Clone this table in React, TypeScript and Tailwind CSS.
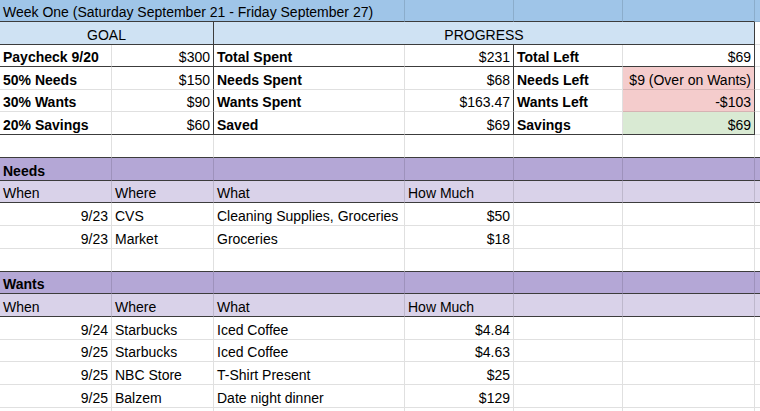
import clsx from 'clsx';

type Cell = {
  t?: string;
  w: string;
  a?: 'l' | 'r' | 'c';
  b?: boolean;
  bg?: string;
  rd?: boolean; // dark right border
  bd?: boolean; // dark bottom border
};

const W = {
  A: 'w-[112px]',
  B: 'w-[102px]',
  C: 'w-[191px]',
  D: 'w-[109px]',
  E: 'w-[109px]',
  F: 'w-[132px]',
  G: 'flex-1',
};

function SheetCell({ c }: { c: Cell }) {
  return (
    <div
      className={clsx(
        'flex items-end shrink-0 border-r border-b px-[3px] pb-[1px] overflow-hidden whitespace-nowrap leading-[16px]',
        c.w,
        c.a === 'r' && 'justify-end',
        c.a === 'c' && 'justify-center',
        c.b && 'font-bold',
        c.bg,
        c.rd ? 'border-r-[#3c3c3c]' : 'border-r-[#0000001f]',
        c.bd ? 'border-b-[#3c3c3c]' : 'border-b-[#0000001f]'
      )}
    >
      {c.t}
    </div>
  );
}

function Row({ h, cells, bg }: { h: string; cells: Cell[]; bg?: string }) {
  return (
    <div className={clsx('flex', h, bg)}>
      {cells.map((c, i) => (
        <SheetCell key={i} c={c} />
      ))}
    </div>
  );
}

// summary rows: goal label/value, spent label/value, left label/value
function summary(vals: string[], opts: { bd?: boolean; fbg?: string }): Cell[] {
  const bd = opts.bd;
  return [
    { t: vals[0], w: W.A, b: true, bd },
    { t: vals[1], w: W.B, a: 'r', rd: true, bd },
    { t: vals[2], w: W.C, b: true, bd },
    { t: vals[3], w: W.D, a: 'r', rd: true, bd },
    { t: vals[4], w: W.E, b: true, bd },
    { t: vals[5], w: W.F, a: 'r', rd: true, bd, bg: opts.fbg },
    { w: W.G },
  ];
}

function entry(when?: string, where?: string, what?: string, much?: string, bd?: boolean): Cell[] {
  return [
    { t: when, w: W.A, a: 'r', bd },
    { t: where, w: W.B, bd },
    { t: what, w: W.C, bd },
    { t: much, w: W.D, a: 'r', bd },
    { w: W.E, bd },
    { w: W.F, bd },
    { w: W.G, bd },
  ];
}

function sectionHead(name: string): Cell[] {
  return [
    { t: name, w: W.A, b: true, bd: true },
    { w: W.B, bd: true },
    { w: W.C, bd: true },
    { w: W.D, bd: true },
    { w: W.E, bd: true },
    { w: W.F, bd: true },
    { w: W.G, bd: true },
  ];
}

function colHead(): Cell[] {
  return entry('When', 'Where', 'What', 'How Much', true).map((c, i) =>
    i === 0 ? { ...c, a: 'l' as const } : i === 3 ? { ...c, a: 'l' as const } : c
  );
}

export default function App() {
  return (
    <div className="w-[760px] h-[411px] overflow-hidden bg-white text-black text-[14px] font-['Liberation_Sans',Arial,sans-serif]">
      {/* Title */}
      <Row
        h="h-[22px]"
        bg="bg-[#9fc5e8]"
        cells={[
          { t: 'Week One (Saturday September 21 - Friday September 27)', w: 'w-[405px]', bd: true },
          { w: W.D, bd: true },
          { w: W.E, bd: true },
          { w: W.F, bd: true },
          { w: W.G },
        ]}
      />

      {/* Goal / Progress headers */}
      <Row
        h="h-[23px]"
        cells={[
          { t: 'GOAL', w: 'w-[214px]', a: 'c', bg: 'bg-[#cfe2f3]', rd: true, bd: true },
          { t: 'PROGRESS', w: 'w-[541px]', a: 'c', bg: 'bg-[#cfe2f3]', rd: true, bd: true },
          { w: W.G },
        ]}
      />

      <Row h="h-[22px]" cells={summary(['Paycheck 9/20', '$300', 'Total Spent', '$231', 'Total Left', '$69'], { bd: true })} />
      <Row h="h-[23px]" cells={summary(['50% Needs', '$150', 'Needs Spent', '$68', 'Needs Left', '$9 (Over on Wants)'], { fbg: 'bg-[#f4cccc]' })} />
      <Row h="h-[22px]" cells={summary(['30% Wants', '$90', 'Wants Spent', '$163.47', 'Wants Left', '-$103'], { fbg: 'bg-[#f4cccc]' })} />
      <Row h="h-[23px]" cells={summary(['20% Savings', '$60', 'Saved', '$69', 'Savings', '$69'], { bd: true, fbg: 'bg-[#d9ead3]' })} />

      <Row h="h-[23px]" cells={entry(undefined, undefined, undefined, undefined, true)} />

      {/* Needs */}
      <Row h="h-[23px]" bg="bg-[#b4a7d6]" cells={sectionHead('Needs')} />
      <Row h="h-[22px]" bg="bg-[#d9d2e9]" cells={colHead()} />
      <Row h="h-[23px]" cells={entry('9/23', 'CVS', 'Cleaning Supplies, Groceries', '$50')} />
      <Row h="h-[23px]" cells={entry('9/23', 'Market', 'Groceries', '$18')} />
      <Row h="h-[23px]" cells={entry(undefined, undefined, undefined, undefined, true)} />

      {/* Wants */}
      <Row h="h-[22px]" bg="bg-[#b4a7d6]" cells={sectionHead('Wants')} />
      <Row h="h-[23px]" bg="bg-[#d9d2e9]" cells={colHead()} />
      <Row h="h-[23px]" cells={entry('9/24', 'Starbucks', 'Iced Coffee', '$4.84')} />
      <Row h="h-[22px]" cells={entry('9/25', 'Starbucks', 'Iced Coffee', '$4.63')} />
      <Row h="h-[23px]" cells={entry('9/25', 'NBC Store', 'T-Shirt Present', '$25')} />
      <Row h="h-[23px]" cells={entry('9/25', 'Balzem', 'Date night dinner', '$129')} />
      <Row h="h-[23px]" cells={entry()} />
    </div>
  );
}
